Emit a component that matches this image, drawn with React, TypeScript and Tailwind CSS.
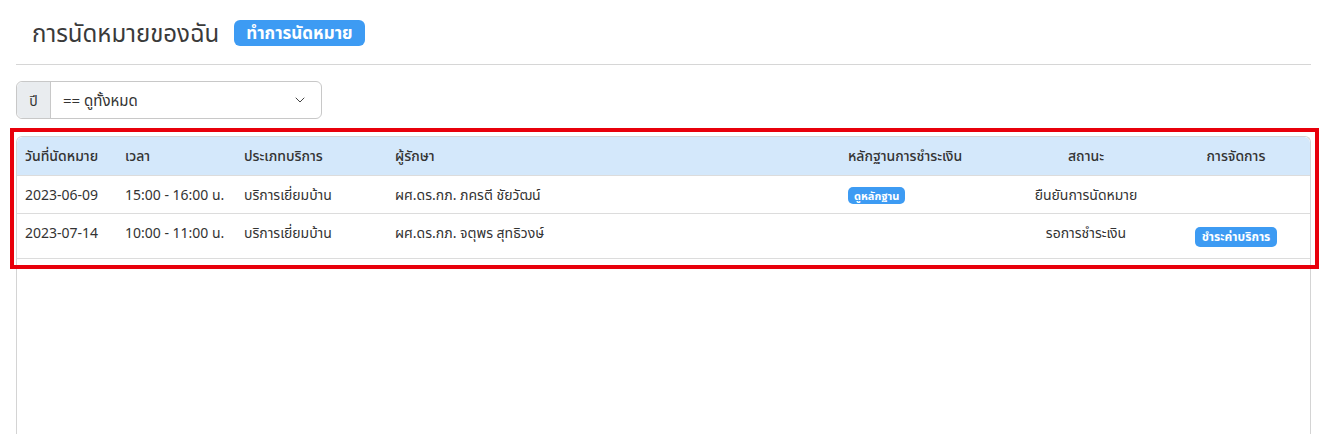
import { ChevronDown } from "lucide-react";

type Row = {
  date: string;
  time: string;
  service: string;
  therapist: string;
  proof: boolean;
  status: string;
  pay: boolean;
};

const rows: Row[] = [
  {
    date: "2023-06-09",
    time: "15:00 - 16:00 น.",
    service: "บริการเยี่ยมบ้าน",
    therapist: "ผศ.ดร.กภ. ภครตี ชัยวัฒน์",
    proof: true,
    status: "ยืนยันการนัดหมาย",
    pay: false,
  },
  {
    date: "2023-07-14",
    time: "10:00 - 11:00 น.",
    service: "บริการเยี่ยมบ้าน",
    therapist: "ผศ.ดร.กภ. จตุพร สุทธิวงษ์",
    proof: false,
    status: "รอการชำระเงิน",
    pay: true,
  },
];

export default function App() {
  return (
    <div
      className="relative min-h-[434px] bg-white text-[#333] pl-4 pr-[22px]"
      style={{ fontFamily: '"Noto Sans", "Noto Sans Thai", "Liberation Sans", sans-serif' }}
    >
      {/* title */}
      <div className="flex items-center gap-[15px] pl-4 pt-[16px] pb-[14px]">
        <h1 className="text-[24px] leading-[34px] font-normal text-[#3a3a3a]">การนัดหมายของฉัน</h1>
        <span className="rounded-md bg-[#3d9bf3] px-3 h-[26px] flex items-center text-[17px] font-bold text-white">
          ทำการนัดหมาย
        </span>
      </div>
      <hr className="border-t border-[#d6d6d6]" />

      {/* year filter */}
      <div className="mt-4 flex h-[38px] w-[306px] rounded-md border border-[#c8c8c8] text-[15px]">
        <div className="flex w-[34px] items-center justify-center rounded-l-md border-r border-[#c8c8c8] bg-[#e9ecef] text-[14px]">
          ปี
        </div>
        <div className="flex flex-1 items-center justify-between pl-[12px] pr-[13px]">
          <span>== ดูทั้งหมด</span>
          <ChevronDown size={16} strokeWidth={1.5} className="text-[#444]" />
        </div>
      </div>

      {/* table card */}
      <div className="mt-[17px] h-[298px] rounded-t-md border border-b-0 border-[#d4d4d4]">
        <table className="w-full table-fixed border-collapse text-[14px]">
          <colgroup>
            <col className="w-[100px]" />
            <col className="w-[119px]" />
            <col className="w-[151px]" />
            <col className="w-[453px]" />
            <col className="w-[170px]" />
            <col className="w-[152px]" />
            <col />
          </colgroup>
          <thead>
            <tr className="h-[38px] bg-[#d4e8fb] text-left">
              <th className="rounded-tl-md px-2 font-medium">วันที่นัดหมาย</th>
              <th className="px-2 font-medium">เวลา</th>
              <th className="px-2 font-medium">ประเภทบริการ</th>
              <th className="px-2 font-medium">ผู้รักษา</th>
              <th className="px-2 font-medium">หลักฐานการชำระเงิน</th>
              <th className="px-2 text-center font-medium">สถานะ</th>
              <th className="rounded-tr-md px-2 text-center font-medium">การจัดการ</th>
            </tr>
          </thead>
          <tbody>
            {rows.map((r, i) => {
              const cell = i === 0 ? "px-2" : "px-2 pb-[7px]";
              return (
                <tr key={r.date} className={`border-t border-[#dcdcdc] ${i === 0 ? "h-[38px]" : "h-[45px] border-b"}`}>
                  <td className={cell}>{r.date}</td>
                  <td className={cell}>{r.time}</td>
                  <td className={cell}>{r.service}</td>
                  <td className={cell}>{r.therapist}</td>
                  <td className={cell}>
                    {r.proof && (
                      <span className="inline-flex h-[17px] items-center rounded-[5px] bg-[#3d9bf3] px-[6px] text-[11px] font-bold text-white">
                        ดูหลักฐาน
                      </span>
                    )}
                  </td>
                  <td className={`${cell} text-center`}>{r.status}</td>
                  <td className="px-2 text-center">
                    {r.pay && (
                      <span className="inline-flex h-[20px] items-center rounded-[5px] bg-[#3d9bf3] px-[7px] text-[12px] font-bold text-white">
                        ชำระค่าบริการ
                      </span>
                    )}
                  </td>
                </tr>
              );
            })}
          </tbody>
        </table>
      </div>

      {/* highlight annotation */}
      <div className="pointer-events-none absolute left-[10px] top-[128px] h-[141px] w-[1309px] border-4 border-[#e8000b]" />
    </div>
  );
}
